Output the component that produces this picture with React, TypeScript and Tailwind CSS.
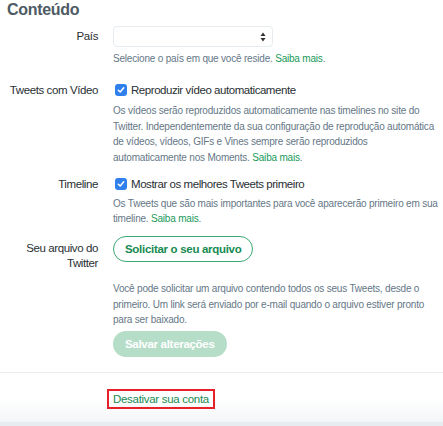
import React from "react";

const font = { fontFamily: '"Liberation Sans", Arial, sans-serif' };

function Check() {
  return (
    <span className="inline-flex h-[12px] w-[12px] items-center justify-center rounded-[3px] bg-[#2f80ed] mr-[4px] shrink-0">
      <svg width="8" height="8" viewBox="0 0 8 8">
        <path d="M1.3 4.2 L3.2 6 L6.7 1.8" stroke="white" strokeWidth="1.5" fill="none" strokeLinecap="round" strokeLinejoin="round" />
      </svg>
    </span>
  );
}

function Link({ children }: { children: React.ReactNode }) {
  return <span className="text-[#1a9a5a]">{children}</span>;
}

const label = "w-[98px] text-right text-[11.5px] tracking-[-0.4px] shrink-0 whitespace-nowrap";
const desc = "text-[10px] tracking-[-0.2px] leading-[15.4px] text-[#657786] whitespace-nowrap";

export default function App() {
  return (
    <div style={font} className="w-[443px] h-[426px] bg-white overflow-hidden flex flex-col text-[#292f33]">
      <h1 className="text-[16px] tracking-[-0.3px] font-bold text-[#4e5a64] leading-[20px] pl-[7px]">Conteúdo</h1>

      {/* País */}
      <div className="flex mt-[6px]">
        <div className={`${label} leading-[21px]`}>País</div>
        <div className="ml-[15px] flex-1">
          <div className="w-[160px] h-[21px] border border-[#e6ecf0] rounded-[4px] flex items-center justify-end pr-[6px]">
            <svg width="6" height="10" viewBox="0 0 6 10">
              <path d="M3 0.5 L5.5 4 L0.5 4 Z" fill="#333" />
              <path d="M3 9.5 L5.5 6 L0.5 6 Z" fill="#333" />
            </svg>
          </div>
          <p className={`mt-[4px] ${desc}`}>
            Selecione o país em que você reside. <Link>Saiba mais</Link>.
          </p>
        </div>
      </div>

      {/* Tweets com Vídeo */}
      <div className="flex mt-[15px]">
        <div className={`${label} leading-[18px]`}>Tweets com Vídeo</div>
        <div className="ml-[15px] flex-1">
          <div className="flex items-center text-[11.5px] tracking-[-0.45px] leading-[18px] ml-[2px] whitespace-nowrap">
            <Check />
            Reproduzir vídeo automaticamente
          </div>
          <p className={`mt-[4px] ${desc}`}>
            Os vídeos serão reproduzidos automaticamente nas timelines no site do<br />
            Twitter. Independentemente da sua configuração de reprodução automática<br />
            de vídeos, vídeos, GIFs e Vines sempre serão reproduzidos<br />
            automaticamente nos Moments. <Link>Saiba mais</Link>.
          </p>
        </div>
      </div>

      {/* Timeline */}
      <div className="flex mt-[10px]">
        <div className={`${label} leading-[18px]`}>Timeline</div>
        <div className="ml-[15px] flex-1">
          <div className="flex items-center text-[11.5px] tracking-[-0.45px] leading-[18px] ml-[2px] whitespace-nowrap">
            <Check />
            Mostrar os melhores Tweets primeiro
          </div>
          <p className={`mt-[2.5px] ${desc}`}>
            Os Tweets que são mais importantes para você aparecerão primeiro em sua<br />
            timeline. <Link>Saiba mais</Link>.
          </p>
        </div>
      </div>

      {/* Seu arquivo */}
      <div className="flex mt-[10px]">
        <div className={`${label} leading-[15px] pt-[4.5px]`}>
          Seu arquivo do<br />Twitter
        </div>
        <div className="ml-[15px] flex-1">
          <button className="h-[26px] px-[11px] rounded-full border border-[#3aa873] text-[#178a51] font-bold text-[11.5px] tracking-[-0.3px] leading-[24px] whitespace-nowrap">
            Solicitar o seu arquivo
          </button>
          <p className={`mt-[19px] ${desc}`}>
            Você pode solicitar um arquivo contendo todos os seus Tweets, desde o<br />
            primeiro. Um link será enviado por e-mail quando o arquivo estiver pronto<br />
            para ser baixado.
          </p>
          <button className="mt-[3px] h-[26px] px-[12px] rounded-full bg-[#b5ddc8] text-white font-bold text-[11.5px] tracking-[-0.3px] leading-[26px] whitespace-nowrap">
            Salvar alterações
          </button>
        </div>
      </div>

      <div className="mt-[15px] h-px bg-[#e6ecf0]" />

      <div className="flex-1 bg-gradient-to-b from-white via-white to-[#f3f6f8] pl-[107px] pt-[13px]">
        <div className="inline-block border-2 border-[#e8202a] px-[4px] h-[20px] leading-[16px] text-[11.5px] tracking-[-0.3px] text-[#1a8a52]">
          Desativar sua conta
        </div>
      </div>
      <div className="h-[4px] bg-[#e6ecf0]" />
    </div>
  );
}
